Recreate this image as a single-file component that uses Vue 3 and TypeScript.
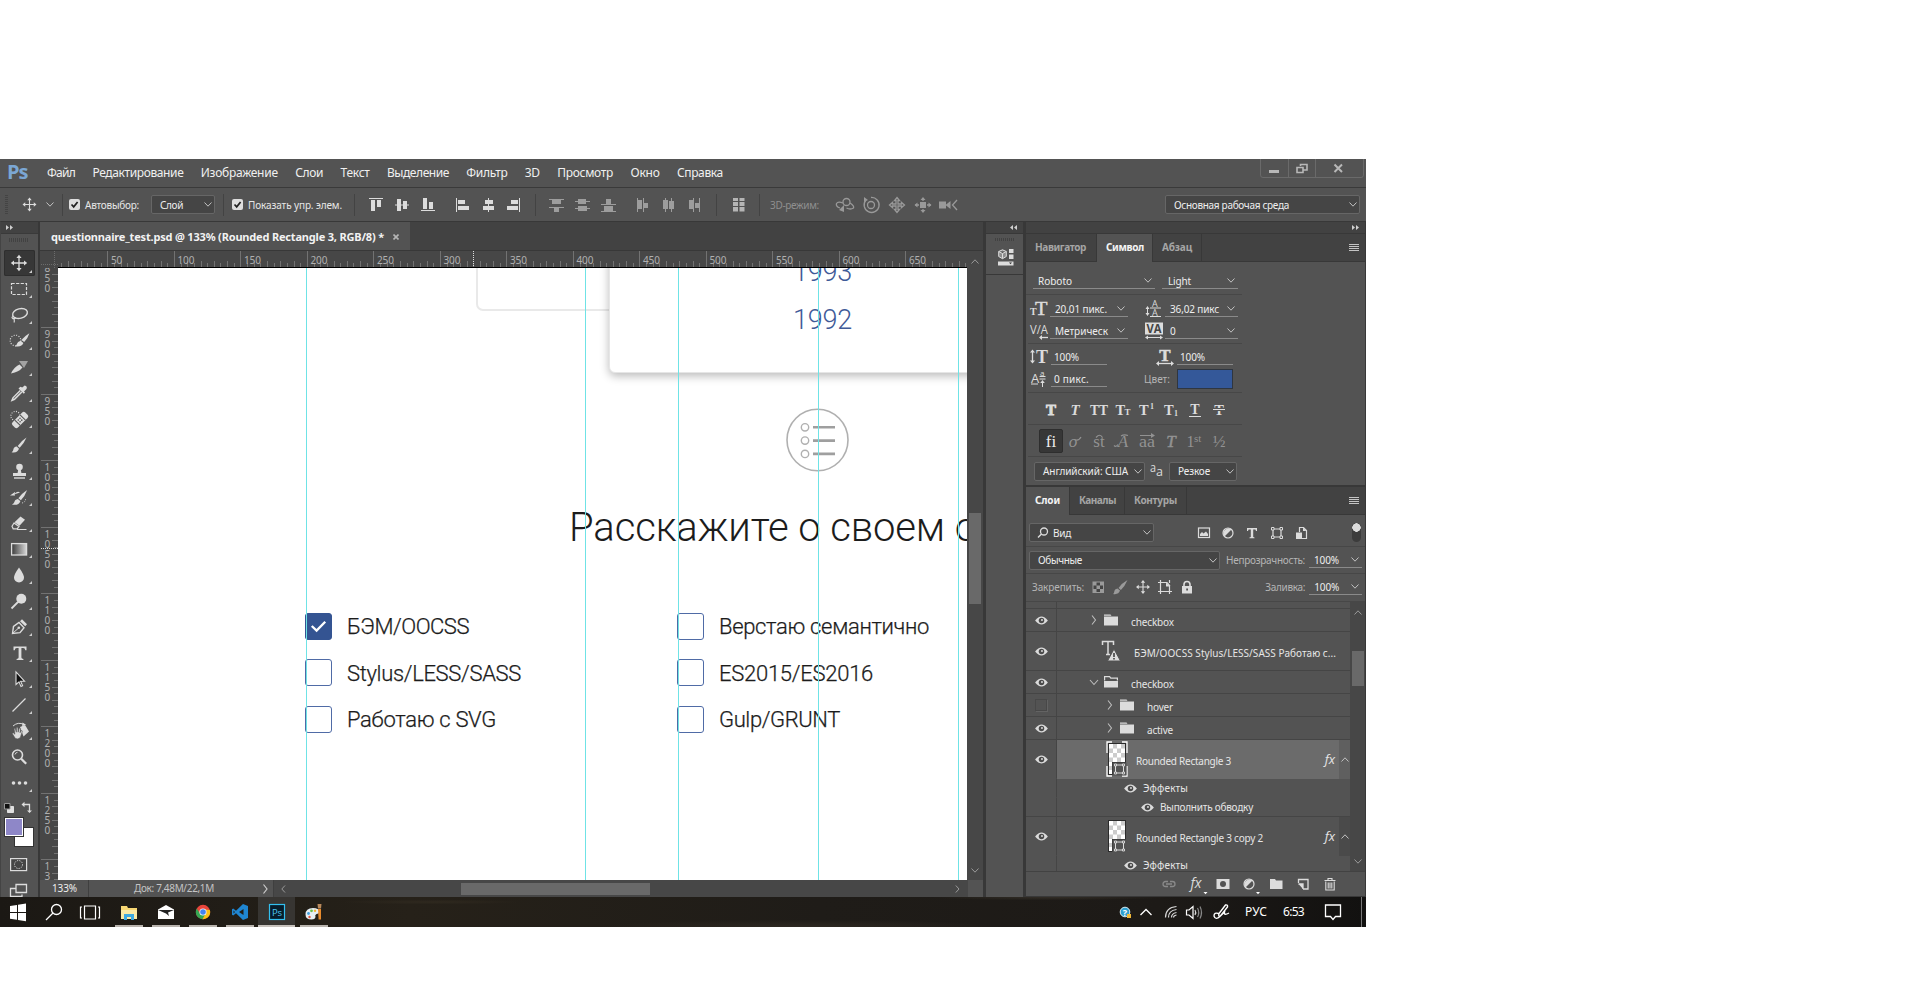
<script setup lang="ts">
interface Sized { t: string; w: number }
interface Layer {
  kind: 'top' | 'closed' | 'open' | 'text' | 'shape' | 'fx'
  h: number
  pad: number
  name: string
  w: number
  eye: 'on' | 'off' | 'none'
  selected?: boolean
  last?: boolean
}

/* Letter-spaces a label so that it fills the given width. */
const vFit = {
  mounted(el: HTMLElement, binding: { value: number }) {
    const natural = el.getBoundingClientRect().width
    const count = (el.textContent ?? '').trim().length
    if (count > 0) el.style.letterSpacing = ((binding.value - natural) / count).toFixed(3) + 'px'
  },
}

const menu: Sized[] = [
  { t: 'Файл', w: 28 }, { t: 'Редактирование', w: 91 }, { t: 'Изображение', w: 77 }, { t: 'Слои', w: 28 },
  { t: 'Текст', w: 29 }, { t: 'Выделение', w: 62 }, { t: 'Фильтр', w: 41 }, { t: '3D', w: 15 },
  { t: 'Просмотр', w: 56 }, { t: 'Окно', w: 29 }, { t: 'Справка', w: 46 },
]

const L = '#dcdcdc'
const move = `<path d="M10 3V17M3 10H17" stroke="${L}" stroke-width="1.3"/><path d="M10 1.8l2.6 3.2H7.4zM10 18.2l2.6-3.2H7.4zM1.8 10l3.2-2.6v5.2zM18.2 10l-3.2-2.6v5.2z" fill="${L}"/>`
const brush = `<path d="M17.5 2.5Q12 6 8.7 11l2 1.8Q15 8.500 17.500 2.500z" fill="${L}"/><path d="M7.800 11.600Q4.600 12 4.300 14.700 4 16.600 2.600 17.300 8.600 18.300 10 13.800z" fill="${L}"/>`
const eyeIcon = `<path d="M3.300 10Q10 1.800 16.700 10 10 18.200 3.300 10z" fill="${L}"/><circle cx="10" cy="10" r="2.900" fill="#4b4b4b"/><circle cx="10.500" cy="9.500" r="1" fill="${L}"/>`
const halfCircle = `<circle cx="10" cy="10" r="5" fill="none" stroke="${L}" stroke-width="1.200"/><path d="M13.500 6.500A5 5 0 0 0 6.500 13.500z" fill="${L}"/>`
const folder = `<path d="M3 4.500h6.500l1 1.200H3zM3 6.500h14v9H3z" fill="${L}"/>`
const shape = `<path d="M6 6h8v8H6z" fill="none" stroke="${L}" stroke-width="1.200"/><path d="M4.500 4.500h2.500v2.500H4.500zM13 4.500h2.500v2.500H13zM4.500 13h2.500v2.500H4.500zM13 13h2.500v2.500H13z" fill="#4b4b4b" stroke="${L}" stroke-width="1"/>`

const tools: string[] = [
  move,
  `<rect x="2.500" y="4.500" width="15" height="11" fill="none" stroke="${L}" stroke-width="1.200" stroke-dasharray="3.200 1.400"/>`,
  `<ellipse cx="11" cy="8.500" rx="7.500" ry="4.800" transform="rotate(-14 11 8.500)" fill="none" stroke="${L}" stroke-width="1.400"/><path d="M4 11.500q-2 1 0 2.200 2.500 0 2.600-1.500M5 13.500q.6 2 .2 4" fill="none" stroke="${L}" stroke-width="1.200"/>`,
  `<circle cx="6.500" cy="9.500" r="5.300" fill="none" stroke="${L}" stroke-width="1.200" stroke-dasharray="1 1.500"/><g transform="translate(6 1) scale(.8)"><path d="M18 1.500Q12 5 8 10l3.500 2.600Q16 8 18 1.500z" fill="${L}"/><path d="M7 11Q3 12 2.500 14.700 2 16.600 0 17.800 8.600 19.300 10.500 13.800z" fill="${L}"/></g>`,
  `<path d="M2 16.500Q5 10 10.500 7.500l3 3Q10 15 2 16.500z" fill="${L}"/><path d="M10 4h9l-4 7z" fill="#a2a2a2"/>`,
  `<path d="M11.300 7.500L4 14.800l-1 2.500 2.500-1 7.300-7.300" fill="none" stroke="${L}" stroke-width="1.500"/><path d="M9.500 5.500l5.300 5.300 1.200-1.200-1-1 2.500-2.500q1.200-3-1.800-3.600L13.200 4.600l-1.800-.9z" fill="${L}"/>`,
  `<circle cx="6.500" cy="7" r="4.600" fill="none" stroke="${L}" stroke-width="1.100" stroke-dasharray="1 1.400"/><g transform="rotate(-45 11 11)"><rect x="2" y="7.300" width="18" height="7.600" rx="2.200" fill="${L}"/><path d="M7.300 7v8M14.700 7v8" stroke="#535353"/><circle cx="9.800" cy="9.800" r=".8" fill="#535353"/><circle cx="12.200" cy="9.800" r=".8" fill="#535353"/><circle cx="9.800" cy="12.300" r=".8" fill="#535353"/><circle cx="12.200" cy="12.300" r=".8" fill="#535353"/></g>`,
  brush,
  `<circle cx="10.500" cy="6" r="3.300" fill="${L}"/><path d="M9.300 8h2.400l.7 4H17v3H4v-3h4.600z" fill="${L}"/><path d="M5 17h11" stroke="${L}" stroke-width="1.400"/>`,
  `<g transform="translate(2 1.500) scale(.92)"><path d="M17.500 1.500Q12 5 8 10.500l2.700 2.300Q15 8.500 17.500 1.500z" fill="${L}"/><path d="M7.500 11.300Q4 12 3.700 14.700 3 16.600 1 17.500 8.600 18.800 10.200 13.800z" fill="${L}"/></g><path d="M1 8.500h5V5zM5 7.500q3-4 6-2" fill="${L}"/><path d="M13 16q4-1 3.500-5" fill="none" stroke="${L}" stroke-dasharray="1 1.300"/>`,
  `<path d="M11.500 3.500l4.500 3.200-5.500 6-5-3.400z" fill="${L}"/><path d="M5 10l5 3.400-1.800 2.400H4.200L3 13.200z" fill="#535353" stroke="${L}" stroke-width="1.200"/><path d="M8 16.500h9.500" stroke="${L}"/>`,
  `<defs><linearGradient id="toolGrad"><stop offset="0" stop-color="#3a3a3a"/><stop offset="1" stop-color="#d8d8d8"/></linearGradient></defs><rect x="2.600" y="4.600" width="15" height="11.400" fill="url(#toolGrad)" stroke="${L}" stroke-width="1.300"/>`,
  `<path d="M10 2.500Q15 9.500 15 12.500a5 5 0 0 1-10 0Q5 9.500 10 2.500z" fill="${L}"/>`,
  `<circle cx="12.300" cy="7.800" r="5" fill="${L}"/><path d="M9 11L2.500 17.500" stroke="${L}" stroke-width="1.800"/>`,
  `<path d="M3.500 16.500l1-7 5.500-4 5 5.200-4 5z" fill="none" stroke="${L}" stroke-width="1.400"/><path d="M3.500 16.500l5.800-5.200" stroke="${L}"/><circle cx="9.800" cy="10.800" r="1.300" fill="${L}"/><path d="M11 4.200l2-2 5 5-1.800 2z" fill="${L}"/>`,
  `<path d="M4.500 3.500h13v3.800h-1.200q-.2-2.200-2.200-2.200h-1.700v9.500q0 1.400 2 1.400v1H7.600v-1q2 0 2-1.400V5.100H7.900q-2 0-2.200 2.200H4.500z" fill="${L}"/>`,
  `<path d="M7 3v12.500l3-2.700 2 4.700 1.600-.7-2-4.600h3.900z" fill="#111" stroke="${L}" stroke-width="1.100"/>`,
  `<path d="M3.500 16.500L16.500 3.500" stroke="${L}" stroke-width="1.300"/>`,
  `<path d="M11 6l5-2 4 6.500-5.500 5z" fill="${L}"/><path d="M4 5q5-4.500 11-1.500" fill="none" stroke="${L}"/><path d="M13.500 1.500l3.500 2.300-3.800 1.500z" fill="${L}"/><path d="M3.200 12.500l1-.8 1.700 1.500-.8-5.500q.9-.8 1.400.2l.8 3.300.1-4.500q.9-.8 1.500.1l.2 4.400 1.100-3.900q1-.6 1.400.3l-.6 4.100 1.300-2q1-.3 1.100.6-1.400 4-2 6.200-2.500 2.500-5.200.8z" fill="${L}" stroke="#535353" stroke-width=".6"/>`,
  `<circle cx="8.500" cy="8" r="5" fill="none" stroke="${L}" stroke-width="1.600"/><path d="M12.200 11.800l5 5" stroke="${L}" stroke-width="2.300"/><path d="M6 7.500q.5-2 2.500-2.200" fill="none" stroke="${L}" stroke-width=".9"/>`,
  `<circle cx="4.500" cy="10" r="1.800" fill="${L}"/><circle cx="10.500" cy="10" r="1.800" fill="${L}"/><circle cx="16.500" cy="10" r="1.800" fill="${L}"/>`,
]

const rulerX = (v: number): number => 107.4 - 58 + ((v - 50) / 50) * 66.5
const rulerY = (v: number): number => 327.4 - 268 + ((v - 900) / 50) * 66.5
const xTicks: number[] = Array.from({ length: 138 }, (_, i) => 15 + i * 5).filter((v) => rulerX(v) > 0 && rulerX(v) < 909)
const yTicks: number[] = Array.from({ length: 94 }, (_, i) => 860 + i * 5).filter((v) => rulerY(v) > 0 && rulerY(v) < 612)
const xMajor = xTicks.filter((v) => v % 50 === 0)
const yMajor: number[] = [850, 900, 950, 1000, 1050, 1100, 1150, 1200, 1250, 1300]
const tickLen = (v: number): number => (v % 50 === 0 ? 17 : v % 10 === 0 ? 6 : 4)

const skills: Sized[][] = [
  [{ t: 'БЭМ/OOCSS', w: 122 }, { t: 'Stylus/LESS/SASS', w: 174 }, { t: 'Работаю с SVG', w: 149 }],
  [{ t: 'Верстаю семантично', w: 210 }, { t: 'ES2015/ES2016', w: 154 }, { t: 'Gulp/GRUNT', w: 121 }],
]

const styles: string[] = [
  `<text x="10" y="15.500" text-anchor="middle" font-size="15" font-weight="bold" stroke="${L}" stroke-width=".9">T</text>`,
  '<text x="10" y="15.500" text-anchor="middle" font-size="15" font-style="italic" font-weight="bold">T</text>',
  '<text x="1" y="15.500" font-size="14.500" font-weight="bold" textLength="18" lengthAdjust="spacingAndGlyphs">TT</text>',
  '<text x="2.500" y="15.500" font-size="14.500" font-weight="bold">T</text><text x="11.500" y="15.500" font-size="9" font-weight="bold">T</text>',
  '<text x="2" y="15.500" font-size="14.500" font-weight="bold">T</text><text x="13" y="9.500" font-size="8" font-weight="bold">1</text>',
  '<text x="3" y="15.500" font-size="14.500" font-weight="bold">T</text><text x="13" y="17" font-size="8" font-weight="bold">1</text>',
  `<text x="10" y="14.500" text-anchor="middle" font-size="14" font-weight="bold">T</text><path d="M4 17.500h12" stroke="${L}"/>`,
  `<text x="10" y="15.500" text-anchor="middle" font-size="14.500" font-weight="bold">T</text><path d="M4 10.500h12" stroke="#535353" stroke-width="3"/><path d="M4 10.500h12" stroke="${L}"/>`,
]
const openType: string[] = [
  '<text x="10" y="15.500" text-anchor="middle" font-size="17">fi</text>',
  '<text x="8" y="15.500" text-anchor="middle" font-size="17" font-style="italic">o</text><path d="M9.500 8.500q4 2 6.500-2.500" fill="none" stroke="#929292" stroke-width="1.200"/>',
  '<text x="10" y="15.500" text-anchor="middle" font-size="17">st</text><path d="M7 6.500q4-4.500 6.500 0" fill="none" stroke="#929292" stroke-width="1.200"/>',
  '<text x="10" y="15.500" text-anchor="middle" font-size="17" font-style="italic">A</text><path d="M1 14.500q2 2 4-1M8 5q3-2 7-.5" fill="none" stroke="#929292" stroke-width="1.200"/>',
  '<text x="2" y="15.500" font-size="17" textLength="16" lengthAdjust="spacingAndGlyphs">aa</text><path d="M3 4.500h12" stroke="#929292"/><path d="M14 2l4 2.500-4 2.500z"/>',
  '<text x="10" y="15.500" text-anchor="middle" font-size="17" font-style="italic" stroke="#929292" stroke-width=".5">T</text>',
  '<text x="1.500" y="15.500" font-size="16">1</text><text x="9" y="11" font-size="11">st</text>',
  '<text x="10" y="15.500" text-anchor="middle" font-size="17">½</text>',
]

const layers: Layer[] = [
  { kind: 'top', h: 7, pad: 0, name: '', w: 0, eye: 'none' },
  { kind: 'closed', h: 23, pad: 31, name: 'checkbox', w: 43, eye: 'on' },
  { kind: 'text', h: 39, pad: 44, name: 'БЭМ/OOCSS Stylus/LESS/SASS Работаю с...', w: 202, eye: 'on' },
  { kind: 'open', h: 23, pad: 31, name: 'checkbox', w: 43, eye: 'on' },
  { kind: 'closed', h: 23, pad: 47, name: 'hover', w: 26, eye: 'off' },
  { kind: 'closed', h: 23, pad: 47, name: 'active', w: 26, eye: 'on' },
  { kind: 'shape', h: 39, pad: 49, name: 'Rounded Rectangle 3', w: 95, eye: 'on', selected: true },
  { kind: 'fx', h: 19, pad: 64, name: 'Эффекты', w: 45, eye: 'none' },
  { kind: 'fx', h: 19, pad: 81, name: 'Выполнить обводку', w: 93, eye: 'none', last: true },
  { kind: 'shape', h: 39, pad: 49, name: 'Rounded Rectangle 3 copy 2', w: 127, eye: 'on' },
  { kind: 'fx', h: 19, pad: 64, name: 'Эффекты', w: 45, eye: 'none' },
]
const isFolder = (k: Layer['kind']): boolean => k === 'closed' || k === 'open'
const checks: number[][] = Array.from({ length: 16 }, (_, i) => [i % 4, Math.floor(i / 4)]).filter(([a, b]) => (a + b) % 2 === 1)

const filterIcons: string[] = [
  `<rect x="4.500" y="5" width="11" height="9.500" fill="none" stroke="${L}" stroke-width="1.200"/><path d="M6 13V11l2-2 1.500 1.500L12 8.500l2 2.500v2z" fill="${L}"/>`,
  halfCircle,
  `<path d="M5 5h10v3h-1l-.6-1.600h-2.200V14l1.300.4v.8h-5v-.8l1.300-.4V6.400H6.600L6 8H5z" fill="${L}"/>`,
  shape,
  `<path d="M8.500 9V4.500h4l3 3v8H11" fill="none" stroke="${L}" stroke-width="1.200"/><path d="M5 9.500h6V16H5zM12 4.500l3.500 3.500H12z" fill="${L}"/>`,
]
const lockIcons: string[] = [
  '<rect x="5" y="5" width="10.500" height="10.500" fill="#444" stroke="#9a9a9a"/><path d="M5 5h3.500v3.500H5zM12 5h3.500v3.500H12zM8.500 8.500H12V12H8.500zM5 12h3.500v3.500H5zM12 12h3.500v3.500H12z" fill="#9a9a9a"/>',
  '<path d="M17.500 3Q12 6 8.500 11l2.400 2Q15 9 17.500 3zM7.500 11.500Q4.500 12 4.300 14.500 4 16.500 3 17 8.600 18 10 13.600z" fill="#9a9a9a"/>',
  `<g transform="translate(1.500 1.500) scale(.85)">${move}</g>`,
  `<path d="M5.500 3v14M3 5.500h9l3 3.500M14.500 9v8M3 14.500h14M14.500 3v3" fill="none" stroke="${L}" stroke-width="1.200"/><path d="M11 5.500l4 4h-4z" fill="${L}"/>`,
  `<path d="M7 9.500V7.500a3 3 0 0 1 6 0v2" fill="none" stroke="${L}" stroke-width="1.600"/><rect x="5" y="9" width="10" height="7.500" fill="${L}"/><rect x="9.300" y="11.500" width="1.600" height="2" fill="#444"/>`,
]
const footIcons: string[] = [
  '<path d="M9 7.500H6.500a2.500 2.500 0 0 0 0 5H9M11 7.500h2.500a2.500 2.500 0 0 1 0 5H11M7 10h6" fill="none" stroke="#8a8a8a" stroke-width="1.300"/>',
  `<text x="10" y="14" text-anchor="middle" font-size="14" font-style="italic" font-family="Open Sans, sans-serif" fill="${L}">fx</text><path d="M17.500 18h4l-2 2.200z" fill="#fff"/>`,
  `<rect x="3.500" y="5" width="13" height="10" fill="${L}"/><circle cx="10" cy="10" r="3" fill="#535353"/>`,
  `${halfCircle}<path d="M17 18h4l-2 2.200z" fill="#fff"/>`,
  `<path d="M4 5h5l1 1.500h6.500V15H4z" fill="${L}"/>`,
  `<path d="M5.500 9V5.500h9.500V15h-5M5.500 10h4.500v5" fill="none" stroke="${L}" stroke-width="1.300"/><path d="M5.500 10h4.500v5z" fill="${L}"/>`,
  `<path d="M4.500 6.500h11M8 6V4.500h4V6M5.800 7.500v8.500h8.400V7.500M8.200 8.500v6M10 8.500v6M11.800 8.500v6" fill="none" stroke="${L}" stroke-width="1.100"/>`,
]

interface App { id: string; svg: string; active?: boolean }
const apps: App[] = [
  { id: 'explorer', svg: '<path d="M2 4h6l1 2h9v11H2z" fill="#f7d774"/><path d="M2 8h16v9H2z" fill="#fbe9a5"/><path d="M5 18v-6h10v6h-3v-3H8v3z" fill="#3fa9e0"/>' },
  { id: 'mail', svg: '<path d="M2 7.500L10 3l8 4.500V17H2z" fill="#fff"/><path d="M2 8h16l-6 2.500 1 3.500-3-2.500z" fill="#222"/>' },
  { id: 'chrome', svg: '<circle cx="10" cy="10" r="7.200" fill="#e8453c"/><path d="M3.700 6.500A7.200 7.200 0 0 0 9.500 17.200L13 11.500 7 11.500z" fill="#35a853"/><path d="M16.900 8A7.200 7.200 0 0 1 9.500 17.200L13.500 10 12 7.500z" fill="#fbc116"/><circle cx="10" cy="10" r="3.600" fill="#f4f4f4"/><circle cx="10" cy="10" r="2.800" fill="#4284f3"/>' },
  { id: 'code', svg: '<path d="M13 2l5 2v12l-5 2-7-6.800-2.800 2.300L2 12.800V7.200l1.200-.7L6 8.800zM13.500 7L9 10l4.500 3zM3.500 8.500v3L5 10z" fill="#1f86d2" fill-rule="evenodd"/>' },
  { id: 'ps', active: true, svg: '<rect x="2.500" y="2.500" width="15" height="15" fill="#061d2c" stroke="#33bfef" stroke-width="1.200"/><text x="10" y="13.500" text-anchor="middle" font-size="9.500" font-family="Open Sans, sans-serif" fill="#4fc6f1">Ps</text>' },
  { id: 'paint', svg: '<path d="M1.500 12.500Q1.500 6 9 6q6 0 6.500 4-.5 2-3 2-2 1-1 3-.5 2.500-4 2.500-6 0-6-5z" fill="#e6eef3"/><circle cx="4.500" cy="11.500" r="1.400" fill="#3f9fe0"/><circle cx="7.500" cy="8.800" r="1.400" fill="#6abf4b"/><circle cx="5.500" cy="15" r="1.200" fill="#e0533d"/><circle cx="11" cy="8.800" r="1.200" fill="#f2b632"/><path d="M13.500 2h4l-.5 4.500h-3z" fill="#b98a5c"/><path d="M14 7h3v10.500h-2.400z" fill="#e98b2d"/>' },
]
</script>

<template>
  <div class="window">
    <header class="menubar">
      <span class="logo">Ps</span>
      <nav class="menu">
        <span v-for="m in menu" :key="m.t" class="menu-item"><span v-fit="m.w">{{ m.t }}</span></span>
      </nav>
      <svg class="winbtns" viewBox="0 0 104 20">
        <path d="M.5 0v16q0 2.500 2.500 2.500h98q2.500 0 2.500-2.500V0M28.500 0v18.500M55.500 0v18.500" fill="none" stroke="#6a6a6a" />
        <path d="M9 11h10v3H9z" fill="#b8b8b8" />
        <path d="M37 8.500h6v5h-6zM40.500 7V5.500H47V11h-3.500" fill="none" stroke="#b8b8b8" stroke-width="1.600" />
        <path d="M74.500 5.500L82 13M82 5.500L74.500 13" stroke="#b8b8b8" stroke-width="2" />
      </svg>
    </header>

    <div class="options">
      <i class="grip-v"></i>
      <svg class="i20 opt-move" viewBox="0 0 20 20" v-html="move"></svg>
      <svg class="chev opt-chev" viewBox="0 0 8 5"><path d="M.5.5L4 4.200 7.500.5" /></svg>
      <i class="sep s1"></i>
      <svg class="tick" viewBox="0 0 11 11"><rect width="11" height="11" rx="2" fill="#dedede" /><path d="M2.500 5.500l2.200 2.400L8.600 3" fill="none" stroke="#222" stroke-width="1.700" /></svg>
      <span class="opt-auto"><span v-fit="54">Автовыбор:</span></span>
      <div class="select sel-layer"><span v-fit="23">Слой</span><svg class="chev" viewBox="0 0 8 5"><path d="M.5.5L4 4.200 7.500.5" /></svg></div>
      <i class="sep s2"></i>
      <svg class="tick" viewBox="0 0 11 11"><rect width="11" height="11" rx="2" fill="#dedede" /><path d="M2.500 5.500l2.200 2.400L8.600 3" fill="none" stroke="#222" stroke-width="1.700" /></svg>
      <span class="opt-show"><span v-fit="94">Показать упр. элем.</span></span>
      <i class="sep s3"></i>
      <svg class="strip-a" viewBox="363 0 173 20">
        <g fill="#dcdcdc">
          <path d="M369 3h14v1h-14zM371 5h4v11h-4zM377 5h4v7h-4zM395 9.500h14v1h-14zM397 4h4v12h-4zM403 6h4v8h-4zM421 15h14v1h-14zM423 3h4v11h-4zM429 7h4v7h-4z" />
          <path d="M456 3h1v14h-1zM458 5h7v4h-7zM458 11h11v4h-11zM488 3h1v14h-1zM485 5h8v4h-8zM483 11h11v4h-11zM519 3h1v14h-1zM511 5h7v4h-7zM507 11h11v4h-11z" />
        </g>
      </svg>
      <i class="sep"></i>
      <svg class="strip-b" viewBox="545 0 172 20">
        <g fill="#9d9d9d">
          <path d="M549 4h15v1h-15zM552 5h9v4h-9zM549 12h15v1h-15zM554 13h5v4h-5zM575 6h15v1h-15zM578 4h8v5h-8zM575 13h15v1h-15zM578 11h9v5h-9zM601 9h15v1h-15zM606 4h5v5h-5zM601 16h15v1h-15zM604 11h9v5h-9z" />
          <path d="M637 3h1v14h-1zM638 5h4v9h-4zM643 3h1v14h-1zM644 8h4v5h-4zM665 3h1v14h-1zM663 5h5v9h-5zM671 3h1v14h-1zM669 6h5v8h-5zM693 3h1v14h-1zM689 5h4v9h-4zM699 3h1v14h-1zM695 8h4v5h-4z" />
        </g>
      </svg>
      <i class="sep"></i>
      <svg class="strip-c" viewBox="718 0 41 20"><path d="M733 3h5v3h-5zM733 7h5v4h-5zM733 12h5v4.500h-5zM739.500 3h5v3h-5zM739.500 7h5v4h-5zM739.500 12h5v4.500h-5z" fill="#b5b5b5" /></svg>
      <i class="sep"></i>
      <span class="opt-3d"><span v-fit="49">3D-режим:</span></span>
      <svg class="strip-d" viewBox="834 0 126 20">
        <g fill="none" stroke="#999" stroke-width="1.300">
          <circle cx="846.500" cy="7" r="3.500" /><path d="M843 8q-5-2-6.500.5-1 3 3.500 4.500M850 8q4.500 3 3.500 5-3 2-7 0" />
          <path d="M866 5a7.500 7.500 0 1 0 5-2.500" /><circle cx="871" cy="10" r="3.500" />
          <path d="M897 2.500l2.500 3h-1.500v3.500h3.500V7.500l3 2.500-3 2.500v-1.500H898v3.500h1.500l-2.500 3-2.500-3h1.500V11h-3.500v1.500l-3-2.500 3-2.500V9h3.500V5.500h-1.500z" />
          <path d="M919 10h-4M927 10h4M923 6V3M923 14v3" /><path d="M957 5l-4.500 5 4.500 5" />
        </g>
        <path d="M844 10v7l-5-2zM864 2l4 3-4 2zM923 2l2.500 3h-5zM923 18l2.500-3h-5zM914.500 10l3-2.500v5zM931.500 10l-3-2.500v5zM920 7h6v6h-6zM939 6.500h7v7h-7zM945.500 10l5-4v8z" fill="#999" />
      </svg>
      <div class="select sel-work"><span v-fit="115">Основная рабочая среда</span><svg class="chev" viewBox="0 0 8 5"><path d="M.5.5L4 4.200 7.500.5" /></svg></div>
    </div>

    <main class="body">
      <aside class="toolbar">
        <div class="tb-head"><svg viewBox="0 0 8 5"><path d="M0 0l3 2.500L0 5zM4 0l3 2.500L4 5z" fill="#d0d0d0" /></svg></div>
        <i class="grip-h"></i>
        <div v-for="(t, n) in tools" :key="n" class="tool" :class="{ on: n === 0 }">
          <svg class="i20" viewBox="0 0 20 20" v-html="t"></svg>
          <i v-if="n !== 19" class="corner"></i>
        </div>
        <svg class="swatches" viewBox="0 0 38 98">
          <path d="M7.500 6.500h6v6h-6z" fill="#e0e0e0" stroke="#e0e0e0" /><path d="M4.500 3.500h5.500v5.500H4.500z" fill="#111" stroke="#999" />
          <path d="M23 4.500h6.500v7" fill="none" stroke="#dcdcdc" stroke-width="1.300" /><path d="M21.500 4.500l3-2.700v5.400zM29.500 13l-2.500-2.500h5z" fill="#dcdcdc" />
          <rect x="14" y="27" width="20" height="20" fill="#333" /><rect x="15" y="28" width="18" height="18" fill="#fff" />
          <rect x="4" y="17" width="20" height="20" fill="#333" /><rect x="5.500" y="18.500" width="17" height="17" fill="#8e87c8" stroke="#fff" />
          <rect x="10.600" y="58.600" width="16" height="12" fill="#454545" stroke="#dcdcdc" stroke-width="1.200" /><circle cx="18.500" cy="64.500" r="4" fill="none" stroke="#dcdcdc" stroke-dasharray="1.200 1.200" />
          <path d="M16 88.500h-5.500v8H22v-2M16 84.500h10.500v8H16z" fill="none" stroke="#dcdcdc" stroke-width="1.300" />
        </svg>
      </aside>

      <section class="doc">
        <div class="tabstrip"><div class="doctab"><span v-fit="333">questionnaire_test.psd @ 133% (Rounded Rectangle 3, RGB/8) *</span><svg class="x" viewBox="0 0 6 6"><path d="M.5.5l5 5M5.500.5l-5 5" stroke="#b5b5b5" stroke-width="1.600" /></svg></div></div>
        <div class="work">
          <div class="rulers">
            <svg class="rcorner" viewBox="0 0 17 17"><path d="M0 13.500h17M13.500 0v17" stroke="#6c6c6c" stroke-dasharray="1 1" /></svg>
            <svg class="ruler-y" viewBox="0 0 17 612">
              <path v-for="v in yTicks" :key="v" :d="`M17 ${Math.round(rulerY(v)) + 0.5}h-${tickLen(v)}`" stroke="#727272" />
              <g v-for="v in yMajor" :key="'l' + v"><text v-for="(d, n) in String(v)" :key="n" x="3.500" :y="rulerY(v) + 11 + n * 10">{{ d }}</text></g>
              <path d="M0 280.500h17" stroke="#ddd" stroke-dasharray="1 1" />
            </svg>
          </div>
          <div class="center">
            <svg class="ruler-x" viewBox="0 0 909 17">
              <path v-for="v in xTicks" :key="v" :d="`M${Math.round(rulerX(v)) + 0.5} 16v-${tickLen(v)}`" stroke="#727272" />
              <text v-for="v in xMajor" :key="'l' + v" :x="rulerX(v) + 3.500" y="13.300">{{ v }}</text>
              <path d="M415.500 0v16" stroke="#ddd" stroke-dasharray="1 1" />
              <path d="M0 16.500h909" stroke="#000" />
            </svg>
            <div class="canvas">
              <div class="box-light"></div>
              <div class="box-years"></div>
              <div class="year y93"><span v-fit="59">1993</span></div>
              <div class="year y92"><span v-fit="59">1992</span></div>
              <svg class="list-icon" viewBox="0 0 66 66">
                <g fill="none" stroke="#b0b0b0"><ellipse cx="32.500" cy="33" rx="30.500" ry="30.700" stroke-width="1.600" />
                  <g stroke-width="1.400"><circle cx="20" cy="20.300" r="3.700" /><circle cx="20" cy="33.600" r="3.700" /><circle cx="20" cy="46.900" r="3.700" /></g>
                  <path d="M28 20.300h22M28 33.600h22M28 46.900h22" stroke="#9f9f9f" stroke-width="2.600" /></g>
              </svg>
              <h1 class="title"><span v-fit="376">Расскажите о своем</span> <span>опыте</span></h1>
              <div class="skills">
                <div v-for="(col, c) in skills" :key="c" class="skill-col">
                  <div v-for="(s, r) in col" :key="s.t" class="skill">
                    <span class="cb" :class="{ checked: c === 0 && r === 0 }"><svg v-if="c === 0 && r === 0" viewBox="0 0 26 26"><path d="M6 12.500l5 4.700L20 8" fill="none" stroke="#fff" stroke-width="2.400" /></svg></span>
                    <span class="sk"><span v-fit="s.w">{{ s.t }}</span></span>
                  </div>
                </div>
              </div>
              <i class="guide g1"></i><i class="guide g2"></i><i class="guide g3"></i><i class="guide g4"></i><i class="guide g5"></i>
            </div>
          </div>
          <div class="vscroll">
            <svg class="chev up" viewBox="0 0 8 5"><path d="M.5 4.500L4 .8l3.500 3.700" /></svg>
            <i class="vthumb"></i>
            <svg class="chev down" viewBox="0 0 8 5"><path d="M.5.5L4 4.200 7.500.5" /></svg>
          </div>
        </div>
        <div class="status">
          <span class="zoom"><span v-fit="25">133%</span></span>
          <span class="docsize"><span v-fit="80">Док: 7,48M/22,1M</span></span>
          <svg class="st-chev" viewBox="0 0 5 10"><path d="M.5.5L4 5 .5 9.500" fill="none" stroke="#ccc" stroke-width="1.200" /></svg>
          <div class="hscroll">
            <svg viewBox="0 0 5 8"><path d="M4 .5L.8 4 4 7.500" /></svg><i class="hthumb"></i><svg class="hr" viewBox="0 0 5 8"><path d="M.8.5L4 4 .8 7.500" /></svg>
          </div>
          <i class="st-corner"></i>
        </div>
      </section>

      <aside class="dock">
        <div class="dock-head"><svg viewBox="0 0 8 5"><path d="M3 0L0 2.500 3 5zM7 0L4 2.500 7 5z" fill="#d0d0d0" /></svg></div>
        <div class="dock-box">
          <i class="grip-h"></i>
          <svg class="dock-ico" viewBox="0 0 16 17"><path d="M4.500.8L8.300 2.500v5L4.500 9.700.7 7.500v-5zM.7 2.500l3.800 2 3.800-2M4.500 4.500v5" fill="#8d8d8d" stroke="#dcdcdc" /><path d="M11 0h4.500v4H11zM11 5.500h4.500V10H11zM0 12.500h15.500v4H0z" fill="#dcdcdc" /><path d="M11 13.500h3l-1.500 1.700z" fill="#333" /></svg>
        </div>
      </aside>

      <aside class="panels">
        <div class="panels-head"><svg viewBox="0 0 8 5"><path d="M0 0l3 2.500L0 5zM4 0l3 2.500L4 5z" fill="#d0d0d0" /></svg></div>
        <section class="char">
          <div class="ptabs">
            <span class="ptab t-nav"><b v-fit="51">Навигатор</b></span><span class="ptab t-sym on"><b v-fit="38">Символ</b></span><span class="ptab t-par"><b v-fit="30">Абзац</b></span>
            <i class="burger"></i>
          </div>
          <div class="crow r-font">
            <div class="field f1"><span v-fit="34">Roboto</span><svg class="chev" viewBox="0 0 8 5"><path d="M.5.5L4 4.200 7.500.5" /></svg></div>
            <div class="field f2"><span v-fit="23">Light</span><svg class="chev" viewBox="0 0 8 5"><path d="M.5.5L4 4.200 7.500.5" /></svg></div>
          </div>
          <div class="cgroup g-a">
            <div class="crow">
              <svg class="ci" viewBox="0 0 18 20"><text x="0" y="15.500" font-size="10" font-weight="bold">T</text><text x="5" y="15.500" font-size="18" stroke="#dcdcdc" stroke-width=".4" textLength="12.500" lengthAdjust="spacingAndGlyphs">T</text></svg>
              <div class="field f3"><span v-fit="52">20,01 пикс.</span><svg class="chev" viewBox="0 0 8 5"><path d="M.5.5L4 4.200 7.500.5" /></svg></div>
              <svg class="ci c2" viewBox="0 0 18 20"><text x="7" y="8" class="sans" font-size="9">A</text><text x="7" y="16.500" class="sans" font-size="9">A</text><path d="M5 9h11M5 17.500h11M2.500 9v6" stroke="#dcdcdc" /><path d="M2.500 7l2 3h-4zM2.500 17l2-3h-4z" /></svg>
              <div class="field f4"><span v-fit="49">36,02 пикс</span><svg class="chev" viewBox="0 0 8 5"><path d="M.5.5L4 4.200 7.500.5" /></svg></div>
            </div>
            <div class="crow">
              <svg class="ci" viewBox="0 0 18 20"><text x="0" y="12.500" class="sans" font-size="13" textLength="18" lengthAdjust="spacingAndGlyphs">V/A</text><path d="M10 16.500h8" stroke="#dcdcdc" stroke-width="1.300" /><path d="M9 16.500l3-2.500v5z" /></svg>
              <div class="field f3"><span v-fit="53">Метрическ</span><svg class="chev" viewBox="0 0 8 5"><path d="M.5.5L4 4.200 7.500.5" /></svg></div>
              <svg class="ci c2" viewBox="0 0 18 20"><rect y="1.500" width="18" height="12" /><text x="1.500" y="12" class="sans" font-size="12" font-weight="bold" fill="#444" textLength="15" lengthAdjust="spacingAndGlyphs">VA</text><path d="M2 16.500h14" stroke="#dcdcdc" /><path d="M0 16.500l3-2v4zM18 16.500l-3-2v4z" /></svg>
              <div class="field f4"><span>0</span><svg class="chev" viewBox="0 0 8 5"><path d="M.5.5L4 4.200 7.500.5" /></svg></div>
            </div>
          </div>
          <div class="cgroup g-b">
            <div class="crow">
              <svg class="ci" viewBox="0 0 18 20"><path d="M2.500 4v11" stroke="#dcdcdc" stroke-width="1.300" /><path d="M2.500 2.500l2.500 3H0zM2.500 16.500l2.500-3H0z" /><text x="6" y="16" font-size="18" font-weight="bold" textLength="12" lengthAdjust="spacingAndGlyphs">T</text></svg>
              <div class="field f5"><span v-fit="25">100%</span></div>
              <svg class="ci c3" viewBox="0 0 18 20"><text x="9" y="13.500" font-size="17" font-weight="bold" text-anchor="middle" stroke="#dcdcdc" stroke-width=".5">T</text><path d="M2 16.500h14" stroke="#dcdcdc" stroke-width="1.300" /><path d="M0 16.500l3-2.500v5zM18 16.500l-3-2.500v5z" /></svg>
              <div class="field f6"><span v-fit="25">100%</span></div>
            </div>
            <div class="crow">
              <svg class="ci" viewBox="0 0 18 20"><text x="1" y="13.500" class="sans" font-size="13">A</text><path d="M1 15h7M9.500 10h6M9.500 7.500h6M12.500 12v6" stroke="#dcdcdc" /><text x="10" y="6.500" class="sans" font-size="8">a</text><path d="M12.500 11l2.300 3h-4.600z" /></svg>
              <div class="field f5"><span v-fit="35">0 пикс.</span></div>
              <span class="clabel"><span v-fit="26">Цвет:</span></span>
              <i class="color"></i>
            </div>
          </div>
          <div class="cgroup icons-row"><svg v-for="(s, n) in styles" :key="n" class="i20 serif" viewBox="0 0 20 20" v-html="s"></svg></div>
          <div class="cgroup icons-row ot"><span v-for="(s, n) in openType" :key="n" :class="{ fi: n === 0 }"><svg class="i20 serif" viewBox="0 0 20 20" v-html="s"></svg></span></div>
          <div class="cgroup lang">
            <div class="select sel-lang"><span v-fit="85">Английский: США</span><svg class="chev" viewBox="0 0 8 5"><path d="M.5.5L4 4.200 7.500.5" /></svg></div>
            <svg class="aa" viewBox="0 0 14 16"><text x="0" y="9" font-size="12" class="sans" textLength="6" lengthAdjust="spacingAndGlyphs">a</text><text x="6" y="13" font-size="13" class="sans" textLength="7" lengthAdjust="spacingAndGlyphs">a</text></svg>
            <div class="select sel-aa"><span v-fit="32">Резкое</span><svg class="chev" viewBox="0 0 8 5"><path d="M.5.5L4 4.200 7.500.5" /></svg></div>
          </div>
        </section>

        <section class="layers">
          <div class="ptabs">
            <span class="ptab t-lay on"><b v-fit="25">Слои</b></span><span class="ptab t-ch"><b v-fit="37">Каналы</b></span><span class="ptab t-pa"><b v-fit="43">Контуры</b></span>
            <i class="burger"></i>
          </div>
          <div class="lrow filter">
            <div class="select sel-kind"><svg class="mag" viewBox="0 0 12 12"><circle cx="7" cy="4.500" r="3.500" fill="none" stroke="#dcdcdc" stroke-width="1.300" /><path d="M4.500 7L1 10.500" stroke="#dcdcdc" stroke-width="1.500" /></svg><span v-fit="18">Вид</span><svg class="chev" viewBox="0 0 8 5"><path d="M.5.5L4 4.200 7.500.5" /></svg></div>
            <div class="ficons"><svg v-for="(f, n) in filterIcons" :key="n" class="i20" viewBox="0 0 20 20" v-html="f"></svg></div>
            <i class="switch"></i>
          </div>
          <div class="lrow blend">
            <div class="select sel-blend"><span v-fit="44">Обычные</span><svg class="chev" viewBox="0 0 8 5"><path d="M.5.5L4 4.200 7.500.5" /></svg></div>
            <span class="lab lab-op"><span v-fit="79">Непрозрачность:</span></span>
            <div class="field fp"><span v-fit="25">100%</span><svg class="chev" viewBox="0 0 8 5"><path d="M.5.5L4 4.200 7.500.5" /></svg></div>
          </div>
          <div class="lrow lock">
            <span class="lab lab-lock"><span v-fit="52">Закрепить:</span></span>
            <div class="licons"><svg v-for="(f, n) in lockIcons" :key="n" class="i20" viewBox="0 0 20 20" v-html="f"></svg></div>
            <span class="lab lab-fill"><span v-fit="40">Заливка:</span></span>
            <div class="field fp"><span v-fit="25">100%</span><svg class="chev" viewBox="0 0 8 5"><path d="M.5.5L4 4.200 7.500.5" /></svg></div>
          </div>
          <div class="listwrap">
            <div class="list">
              <div v-for="(l, n) in layers" :key="n" class="layer" :class="[l.kind, { selected: l.selected, last: l.last }]" :style="{ height: l.h + 'px' }">
                <div class="eyecol"><svg v-if="l.eye === 'on'" class="i20" viewBox="0 0 20 20" v-html="eyeIcon"></svg><i v-if="l.eye === 'off'" class="noeye"></i></div>
                <div class="lcontent" :style="{ paddingLeft: l.pad + 'px' }">
                  <template v-if="isFolder(l.kind)">
                    <svg class="tri" viewBox="0 0 12 10"><path :d="l.kind === 'open' ? 'M2 3l4 4.500L10 3' : 'M4 .5L7.500 5 4 9.500'" fill="none" stroke="#bdbdbd" stroke-width="1.100" /></svg>
                    <svg class="i20 fold" viewBox="0 0 20 20"><g v-if="l.kind === 'closed'" v-html="folder"></g><path v-if="l.kind === 'open'" d="M3.600 8.500V4.600h5l1.200 1.500h6.600v2.400" fill="none" stroke="#dcdcdc" stroke-width="1.200" /><path v-if="l.kind === 'open'" d="M3 9h14v6.500H3z" fill="#dcdcdc" /></svg>
                  </template>
                  <svg v-if="l.kind === 'text'" class="ttype" viewBox="0 0 20 22"><path d="M1.500 5V1.500h11V5M7 1.500v13M5 14.500h4" fill="none" stroke="#dcdcdc" stroke-width="1.500" /><path d="M13 9l6.500 12h-13z" fill="#dcdcdc" stroke="#535353" /><path d="M13 13v4M13 18v1.500" stroke="#333" stroke-width="1.500" /></svg>
                  <svg v-if="l.kind === 'shape'" class="thumb" viewBox="0 0 22 36">
                    <path v-if="l.selected" d="M6 1H1v11M16 1h5v11M1 25v10h5M16 35h5V25" fill="none" stroke="#fff" stroke-width="1.300" />
                    <path d="M2 2h18v20H7v12H2z" fill="#2b2b2b" /><path d="M3 3h16v18H6v12H3z" fill="#fff" />
                    <rect v-for="(c, k) in checks" :key="k" :x="3 + c[0] * 4" :y="3 + c[1] * 4.500" width="4" height="4.500" fill="#ccc" />
                    <path d="M3 25h3v4H3z" fill="#ccc" />
                    <rect x="6.500" y="21.500" width="14" height="13" fill="#535353" />
                    <path d="M9.500 24h8v8h-8z" fill="none" stroke="#dcdcdc" /><path d="M8.500 23h2v2h-2zM16.500 23h2v2h-2zM8.500 31h2v2h-2zM16.500 31h2v2h-2z" fill="#535353" stroke="#dcdcdc" stroke-width=".9" />
                  </svg>
                  <svg v-if="l.kind === 'fx'" class="i20" viewBox="0 0 20 20" v-html="eyeIcon"></svg>
                  <span class="lname"><span v-fit="l.w">{{ l.name }}</span></span>
                  <template v-if="l.kind === 'shape'"><span class="fxmark">fx</span><span class="fold-cell"><svg class="chev" viewBox="0 0 8 5"><path d="M.5 4.500L4 .8l3.500 3.700" /></svg></span></template>
                </div>
              </div>
            </div>
            <div class="lscroll"><svg class="chev" viewBox="0 0 8 5"><path d="M.5 4.500L4 .8l3.500 3.700" /></svg><i></i><svg class="chev ld" viewBox="0 0 8 5"><path d="M.5.5L4 4.200 7.500.5" /></svg></div>
          </div>
          <div class="lfoot"><svg v-for="(f, n) in footIcons" :key="n" class="i20 serif" viewBox="0 0 20 20" v-html="f"></svg></div>
        </section>
      </aside>
    </main>

    <footer class="taskbar">
      <svg class="sys" viewBox="0 0 108 30">
        <path d="M10 9l7-1v7h-7zM18 7.800L26 6.600V15h-8zM10 16h7v6.800l-7-1zM18 16h8v8.200l-8-1.200z" fill="#fff" />
        <circle cx="56.500" cy="12.500" r="5" fill="none" stroke="#fff" stroke-width="1.300" /><path d="M53 16l-7 7" stroke="#fff" stroke-width="1.300" />
        <path d="M84.500 9h11v13h-11zM82 10h-1.500v11H82M98 10h1.500v11H98" fill="none" stroke="#fff" stroke-width="1.200" />
      </svg>
      <div class="apps"><span v-for="a in apps" :key="a.id" class="app" :class="{ active: a.active }"><svg class="i20" viewBox="0 0 20 20" v-html="a.svg"></svg></span></div>
      <svg class="tray" viewBox="1115 0 120 30">
        <circle cx="1125" cy="15" r="4.800" fill="#2d9fd0" stroke="#d9edf5" /><text x="1125" y="18.500" text-anchor="middle" font-size="9" font-weight="bold" fill="#fff">?</text><path d="M1127 17h4v4h-4z" fill="#f0b93a" />
        <path d="M1140.500 18l5.500-5.500 5.500 5.500" fill="none" stroke="#fff" stroke-width="1.300" />
        <g fill="none" stroke="#d8d8d8" stroke-width="1.200"><path d="M1165.500 20.500q0-10 11-11M1168.500 20.500q0-7 8-8M1171.500 20.500q0-4 5-5" /><path d="M1173.500 20.500q0-2 3-2.500" />
          <path d="M1186.500 13h2.500l4-3.500v12L1189 18h-2.500z" stroke="#fff" /><path d="M1195 13q1.500 2.500 0 5" /><path d="M1197.500 11q2.500 4.500 0 9M1200 9.500q3 6 0 12" stroke="#888" />
          <path d="M1218.500 16.500q-4.500-1.500-4.500 2.500 1.500 4.500 6 .5l7.500-9.500q.5-2.500-2-2l-6.500 8.500q-1 3.500 1.500 2.500l4-4q-1 4 4.500 1" stroke="#fff" stroke-width="1.400" /></g>
      </svg>
      <span class="lang-t"><span v-fit="22">РУС</span></span>
      <span class="clock"><span v-fit="21">6:53</span></span>
      <svg class="note" viewBox="0 0 18 18"><path d="M1.500 2h15v11.500h-5l-2.500 3-2.500-3h-5z" fill="none" stroke="#fff" stroke-width="1.300" /></svg>
      <i class="desk"></i>
    </footer>
  </div>
</template>

<style>
body { margin: 0; background: #fff; overflow: hidden; }
</style>

<style scoped>
.window { width: 1366px; height: 768px; margin-top: 159px; display: flex; flex-direction: column; background: #535353; color: #e6e6e6; font: 10px/14px "Noto Sans", "DejaVu Sans", sans-serif; overflow: hidden; }
.window * { box-sizing: border-box; }
.window span, .window b { white-space: nowrap; }
svg { display: block; flex: none; }
i { flex: none; }
.i20 { width: 20px; height: 20px; overflow: visible; }
.chev { width: 8px; height: 5px; fill: none; stroke: #c2c2c2; stroke-width: 1; overflow: visible; }
.select { display: flex; align-items: center; height: 19px; background: #454545; border: 1px solid #666; border-radius: 2px; flex: none; color: #eee; }
.select .chev { margin-left: auto; margin-right: 2.500px; }
.sep { width: 1px; height: 22px; background: #434343; }
.tick { width: 11px; height: 11px; margin-top: -1px; }

.menubar { height: 28px; display: flex; flex: none; }
.logo { width: 47px; padding-left: 7px; font: bold 20px/25px "Open Sans", sans-serif; color: #7ba7d4; letter-spacing: -1px; }
.menu { display: flex; gap: 17.400px; font: 12px/27px "Noto Sans", sans-serif; color: #f0f0f0; }
.winbtns { width: 104px; height: 20px; margin-left: auto; margin-right: 2px; }

.options { height: 34px; flex: none; border-top: 1px solid #3a3a3a; display: flex; align-items: center; }
.grip-v { width: 3px; height: 20px; margin-left: 5px; background: repeating-linear-gradient(#444 0 1px, transparent 1px 2px); }
.opt-move { width: 17px; height: 17px; margin-left: 13px; }
.opt-chev { margin-left: 8px; }
.s1 { margin: 0 6px 0 8px; }
.opt-auto { margin-left: 5px; width: 66px; }
.sel-layer { width: 64px; padding-left: 8px; }
.s2 { margin: 0 8px; }
.opt-show { margin-left: 5px; width: 106px; }
.s3 { margin-right: 8px; }
.strip-a { width: 173px; height: 20px; margin-right: -1px; }
.strip-b { width: 172px; height: 20px; margin-left: 9px; margin-right: -1px; }
.strip-c { width: 41px; height: 20px; margin-left: 1px; }
.opt-3d { width: 64px; margin-left: 10px; color: #8f8f8f; }
.strip-d { width: 126px; height: 20px; }
.sel-work { width: 195px; margin-left: auto; margin-right: 6px; padding-left: 8px; }

.body { height: 676px; flex: none; display: flex; background: #383838; }
.toolbar { width: 38px; background: #535353; border-left: 1px solid #444; margin-right: 2px; border-top: 1px solid #383838; display: flex; flex-direction: column; overflow: hidden; flex: none; }
.tb-head { height: 12px; background: #424242; border-bottom: 1px solid #3a3a3a; padding: 3px 0 0 5px; flex: none; }
.tb-head svg, .dock-head svg, .panels-head svg { width: 8px; height: 5px; }
.grip-h { display: block; width: 20px; height: 4px; margin: 4px 0 0 8px; background: repeating-linear-gradient(90deg, #424242 0 1px, transparent 1px 2px); }
.tool { height: 26px; display: flex; align-items: center; padding-left: 8px; flex: none; position: relative; }
.tool.on { margin-top: 8px; background: #373737; box-shadow: inset 0 0 0 1px #2e2e2e; border-radius: 2px; margin-left: 3px; padding-left: 5px; width: 31px; height: 26px; }
.corner { position: absolute; left: 28px; bottom: 4px; border-left: 3px solid transparent; border-bottom: 3px solid #ccc; }
.tool.on .corner { left: 25px; bottom: 3px; }
.swatches { width: 38px; height: 98px; margin-left: -1px; margin-top: 4px; }

.doc { width: 943px; display: flex; flex-direction: column; margin-right: 3px; flex: none; }
.tabstrip { height: 30px; background: #424242; border-bottom: 1px solid #383838; flex: none; display: flex; border-top: 1px solid #383838; }
.doctab { width: 370px; background: #535353; display: flex; align-items: center; padding: 2px 0 0 11px; font: bold 11px/26px "Noto Sans", sans-serif; color: #f2f2f2; }
.x { width: 6px; height: 6px; margin-left: 9px; }
.work { height: 629px; display: flex; flex: none; }
.rulers { width: 18px; flex: none; background: #474747; padding-left: 1px; }
.rcorner { width: 17px; height: 17px; }
.ruler-y { width: 17px; height: 612px; overflow: hidden; }
.ruler-x { width: 909px; height: 17px; background: #474747; overflow: hidden; }
.ruler-x text, .ruler-y text { fill: #b0b0b0; font: 10px "Noto Sans", sans-serif; }
.center { width: 909px; flex: none; }
.canvas { height: 612px; background: #fff; position: relative; overflow: hidden; font-family: Roboto, sans-serif; font-weight: 300; color: #1c1c1c; }
.box-light { position: absolute; left: 418px; top: -20px; width: 200px; height: 63px; border: 2px solid #e9e9e9; border-radius: 7px; }
.box-years { position: absolute; left: 551px; top: -20px; width: 420px; height: 125px; background: #fff; border-radius: 6px; border: 1px solid #e6e6e6; box-shadow: 0 3px 10px rgba(0, 0, 0, .28); }
.year { position: absolute; left: 735px; font-size: 27px; line-height: 32px; color: #3f5a98; }
.y93 { top: -12px; }
.y92 { top: 36px; }
.list-icon { position: absolute; left: 727px; top: 139px; width: 66px; height: 66px; }
.title { position: absolute; left: 511px; top: 236px; margin: 0; font-size: 40px; line-height: 47px; font-weight: 300; white-space: nowrap; }
.skills { position: absolute; left: 247px; top: 345px; display: flex; }
.skill-col { width: 372px; display: flex; flex-direction: column; gap: 20px; }
.skill { display: flex; align-items: center; height: 26.500px; font-size: 22px; line-height: 26px; -webkit-text-stroke: .25px #1c1c1c; }
.sk { padding-top: 2px; }
.cb { width: 27px; height: 27px; border: 1.500px solid #4f6ba6; border-radius: 3px; margin-right: 15px; flex: none; }
.cb.checked { background: #345492; border-color: #345492; }
.guide { position: absolute; top: 0; bottom: 0; width: 1px; background: #6fe3e6; }
.g1 { left: 248px; } .g2 { left: 527px; } .g3 { left: 620px; } .g4 { left: 760px; } .g5 { left: 900px; }
.vscroll { width: 16px; background: #474747; padding: 8px 0 0 4px; display: flex; flex-direction: column; }
.vthumb { width: 12px; height: 91px; background: #696969; margin: 249px 0 0 -2px; }
.down { margin-top: auto; margin-bottom: 7px; }
.vscroll .chev, .lscroll .chev { stroke: #9a9a9a; }
.status { height: 17px; display: flex; background: #535353; flex: none; color: #eee; line-height: 17px; }
.zoom { width: 49px; padding-left: 12px; border-right: 1px solid #3f3f3f; }
.docsize { width: 173px; padding-left: 45px; color: #c4c4c4; }
.st-chev { width: 5px; height: 10px; margin: 4px 5px 0 1px; }
.hscroll { width: 695px; background: #474747; border-left: 1px solid #3f3f3f; display: flex; align-items: center; padding-left: 7px; }
.hscroll svg { width: 5px; height: 8px; fill: none; stroke: #9a9a9a; }
.hthumb { width: 189px; height: 12px; background: #696969; margin-left: 175px; }
.hscroll .hr { margin-left: 305px; }

.dock { width: 37px; background: #535353; margin-right: 3px; flex: none; }
.dock-head, .panels-head { height: 13px; background: #424242; border-top: 1px solid #383838; border-bottom: 1px solid #383838; }
.dock-head svg { margin: 3px 0 0 24px; }
.dock-box { height: 41px; border-bottom: 1px solid #383838; padding-top: 1px; }
.dock-box .grip-h { margin-top: 3px; margin-left: 9px; height: 3px; }
.dock-ico { width: 16px; height: 17px; margin: 8px 0 0 12px; }

.panels { width: 340px; display: flex; flex-direction: column; flex: none; border-right: 1px solid #383838; }
.panels-head { flex: none; }
.panels-head svg { margin: 3px 0 0 326px; }
.char { height: 251px; flex: none; background: #535353; }
.layers { height: 410px; margin-top: 2px; background: #535353; display: flex; flex-direction: column; flex: none; border-bottom: 1px solid #383838; }
.ptabs { height: 28px; display: flex; background: #424242; border-bottom: 1px solid #383838; flex: none; }
.ptab { padding-left: 9px; line-height: 27px; color: #a5a5a5; border-right: 1px solid #383838; }
.ptab.on { background: #535353; color: #f4f4f4; margin-bottom: -1px; }
.t-nav { width: 71px; } .t-sym { width: 56px; } .t-par { width: 49px; }
.t-lay { width: 44px; } .t-ch { width: 55px; } .t-pa { width: 62px; }
.burger { width: 10px; height: 8px; margin: 10px 6px 0 auto; background: repeating-linear-gradient(#c4c4c4 0 1px, transparent 1px 2px); }
.field { height: 16px; border-bottom: 1px solid #8a8a8a; display: flex; align-items: center; padding-left: 5px; flex: none; color: #eee; }
.field .chev { margin-left: auto; margin-right: 3px; }
.crow { display: flex; height: 22px; align-items: center; }
.r-font { height: 33px; padding: 6px 0 0 7px; border-bottom: 1px solid #474747; width: 216px; }
.f1 { width: 122px; } .f2 { width: 76px; margin-left: 7px; padding-left: 6px; }
.cgroup { width: 214px; margin-left: 2px; border-bottom: 1px solid #474747; }
.g-a { height: 49px; padding-top: 3px; }
.ci { width: 18px; height: 20px; fill: #dcdcdc; font-family: "Liberation Serif", serif; margin-left: 2px; overflow: visible; }
.sans { font-family: "Open Sans", sans-serif; }
.f3 { width: 78px; margin-left: 2px; } .c2 { margin-left: 17px; }
.f4 { width: 73px; margin-left: 2px; }
.g-b { height: 49px; padding-top: 2px; }
.f5 { width: 56px; margin-left: 3px; padding-left: 3px; } .c3 { margin-left: 49px; }
.f6 { width: 56px; margin-left: 3px; padding-left: 3px; }
.clabel { width: 33px; margin-left: 37px; color: #b5b5b5; }
.color { width: 56px; height: 20px; background: #345899; border: 1px solid #2f3640; margin-top: 0; }
.icons-row { height: 32px; display: flex; align-items: center; padding-left: 13px; gap: 4px; }
.serif { font-family: "Liberation Serif", serif; fill: #dcdcdc; }
.ot span { width: 20px; height: 24px; display: flex; align-items: center; }
.ot span .serif { fill: #929292; }
.ot .fi { width: 24px; margin: 0 -2px; background: #373737; border: 1px solid #2e2e2e; border-radius: 2px; padding-left: 1px; }
.ot .fi .serif { fill: #eee; }
.lang { display: flex; align-items: center; border: 0; height: 28px; padding-left: 6px; }
.sel-lang { width: 111px; padding-left: 8px; } .sel-aa { width: 68px; padding-left: 8px; }
.aa { width: 14px; height: 16px; margin: -1px 5px 0 5px; fill: #dcdcdc; }

.lrow { display: flex; align-items: center; border-bottom: 1px solid #474747; flex: none; }
.filter { height: 32px; padding: 4px 0 0 3px; }
.sel-kind { width: 125px; padding-left: 7px; } .mag { width: 12px; height: 12px; margin-right: 4px; }
.ficons { display: flex; margin-left: 40px; gap: 4.200px; }
.switch { width: 9px; height: 19px; margin-left: 41.500px; border-radius: 5px; background: radial-gradient(circle at 50% 4.500px, #dcdcdc 0 4px, transparent 4.500px), #3c3c3c; }
.blend { height: 27px; padding-left: 3px; }
.sel-blend { width: 191px; padding-left: 8px; }
.lab { color: #b5b5b5; } .lab-op { width: 89px; padding-left: 6px; }
.fp { width: 53px; }
.lock { height: 28px; padding: 0 0 1px 6px; }
.lab-lock { width: 56px; } .licons { display: flex; gap: 2.300px; } .lab-fill { margin-left: 68px; width: 44px; }
.listwrap { height: 270px; display: flex; border-bottom: 1px solid #424242; flex: none; }
.list { width: 324px; overflow: hidden; }
.layer { display: flex; overflow: hidden; }
.eyecol { width: 31px; border-right: 1px solid #454545; border-bottom: 1px solid #454545; display: flex; align-items: center; justify-content: center; flex: none; }
.eyecol .i20, .fx .i20 { width: 19px; height: 19px; }
.lcontent { flex: 1; display: flex; align-items: center; border-bottom: 1px solid #454545; }
.fx .eyecol, .shape .eyecol, .fx .lcontent, .shape .lcontent { border-bottom-color: transparent; }
.last .eyecol, .last .lcontent { border-bottom-color: #454545; }
.selected .lcontent { background: #6b6b6b; }
.noeye { width: 12px; height: 12px; border: 1px solid #484848; box-shadow: 1px 1px 0 #636363; }
.tri { width: 12px; height: 10px; }
.fold { margin-left: 1px; }
.closed .lname, .open .lname { margin-left: 10px; }
.ttype { width: 20px; height: 22px; } .text .lname { margin-left: 13px; }
.thumb { width: 22px; height: 36px; } .shape .lname { margin-left: 8px; }
.fx .lname { margin-left: 3px; }
.lname { padding-top: 4px; } .fx .lname { padding-top: 0; }
.fxmark { margin-left: auto; font: italic 13px/20px "Open Sans", sans-serif; margin-right: 4px; }
.fold-cell { width: 11px; height: 39px; background: #4a4a4a; display: flex; align-items: center; padding-left: 2px; }
.selected .fold-cell { background: #5f5f5f; }
.lscroll { width: 15px; background: #474747; display: flex; flex-direction: column; padding: 8px 0 0 4px; }
.lscroll i { width: 12px; height: 35px; margin: 36px 0 0 -2px; background: #696969; }
.ld { margin-top: auto; margin-bottom: 7px; }
.lfoot { display: flex; gap: 6.800px; padding: 2px 0 0 133px; }

.taskbar { height: 30px; flex: none; display: flex; color: #fff; font: 12px/29px "Noto Sans", sans-serif; background: radial-gradient(ellipse at 430px 5px, #2f291f, transparent 90px), radial-gradient(ellipse at 800px 30px, #2e2922, transparent 200px), radial-gradient(ellipse at 1050px 0, #332e27, transparent 120px), linear-gradient(90deg, #1b1814, #262119 30%, #1f1c18 60%, #1d1a17 85%, #121110); }
.sys { width: 108px; height: 30px; }
.apps { display: flex; padding-left: 2px; }
.app { width: 37px; height: 30px; display: flex; align-items: center; justify-content: center; background: linear-gradient(#b9b4ae, #b9b4ae) 50% 28px / 28px 2px no-repeat; }
.app.active { background: linear-gradient(#c6c1bc, #c6c1bc) 50% 28px / 37px 2px no-repeat, #373532; }
.tray { width: 120px; height: 30px; margin-left: 783px; }
.lang-t { width: 38px; padding-left: 10px; } .clock { width: 50px; padding-left: 10px; }
.note { width: 18px; height: 18px; margin: 6px 0 0 1px; } .desk { width: 1px; background: #777; margin-left: 19px; }
</style>
